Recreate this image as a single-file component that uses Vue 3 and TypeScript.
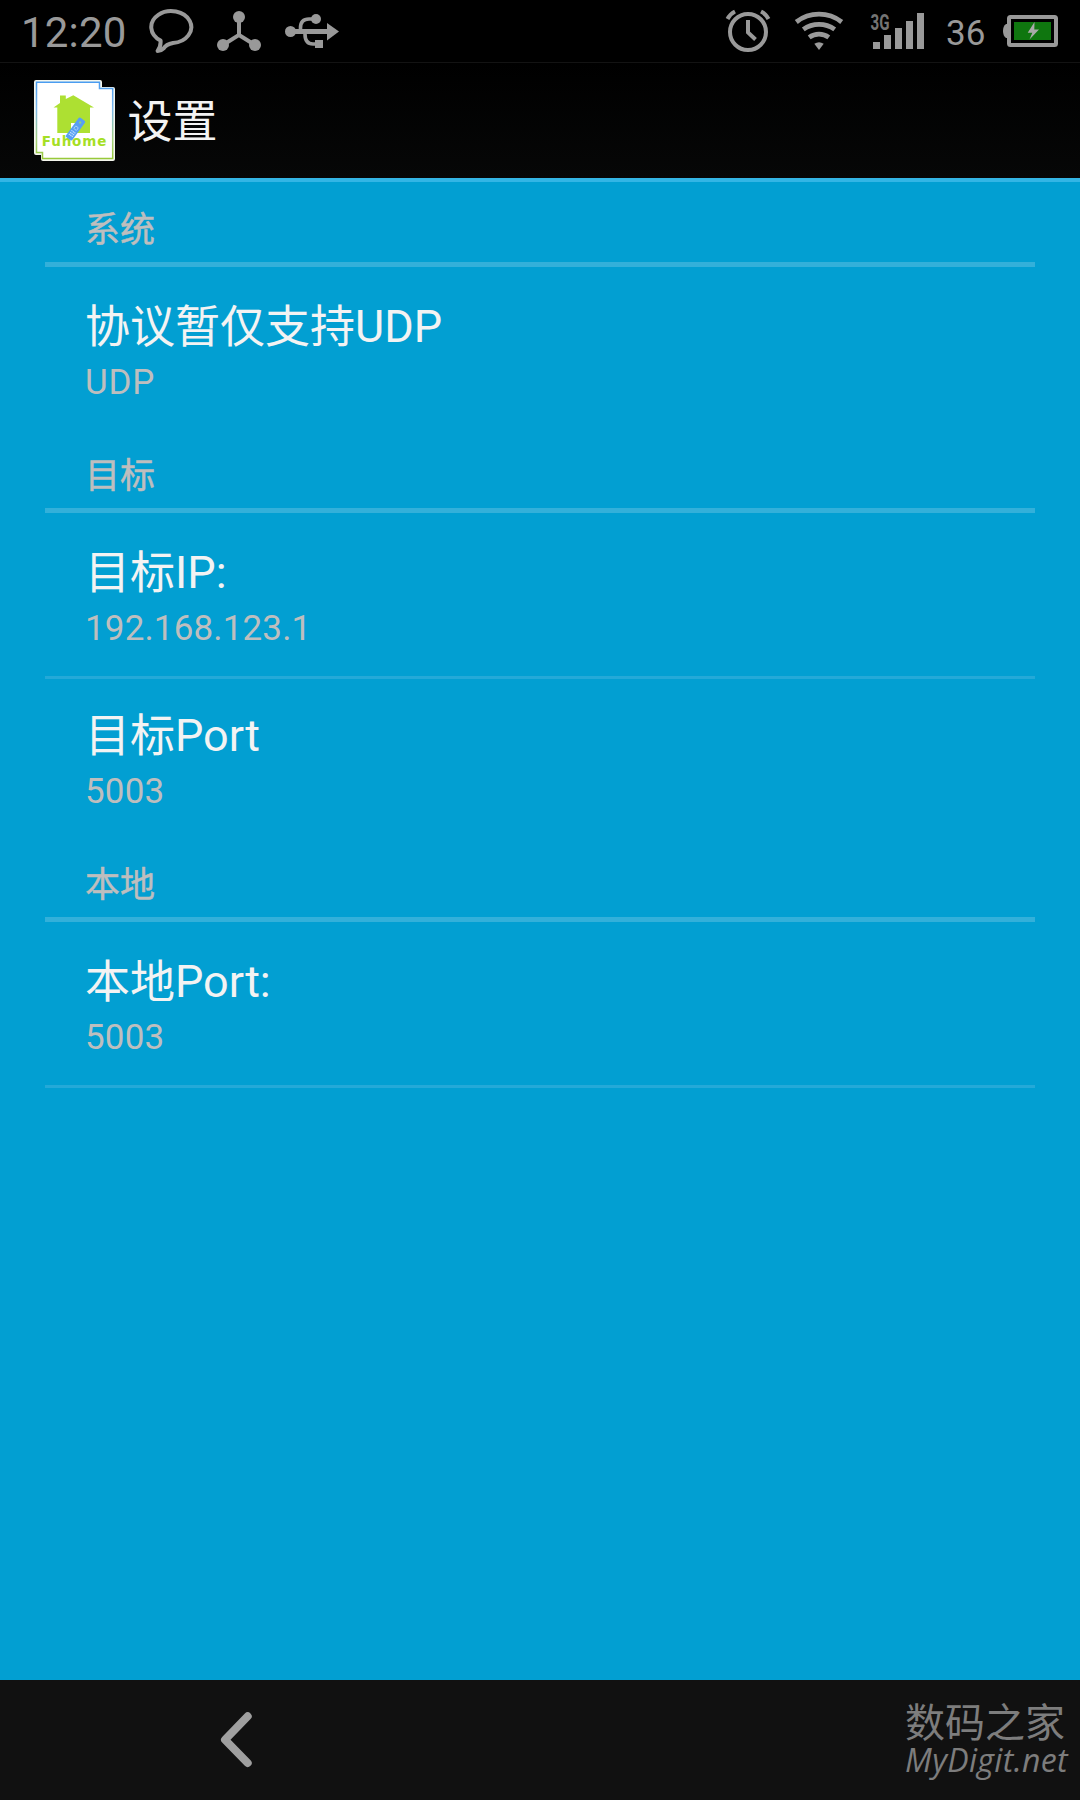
<script setup lang="ts">
interface Preference {
  label: string
  suffix: string
  summary: string
}

interface Category {
  name: string
  items: Preference[]
}

const categories: Category[] = [
  { name: '系统', items: [{ label: '协议暂仅支持', suffix: 'UDP', summary: 'UDP' }] },
  {
    name: '目标',
    items: [
      { label: '目标', suffix: 'IP:', summary: '192.168.123.1' },
      { label: '目标', suffix: 'Port', summary: '5003' },
    ],
  },
  { name: '本地', items: [{ label: '本地', suffix: 'Port:', summary: '5003' }] },
]
</script>

<template>
  <div class="screen">
    <div class="status">
      <span class="clock">12:20</span>
      <svg class="chat" width="46" height="62" viewBox="148 0 46 62">
        <path d="M160.6 40.6A20 16 0 1 1 173 43Q166 44.4 163.6 48.4Q161.4 50.8 157.6 51Q161 46.500 160.600 40.600Z" fill="none" stroke="#999" stroke-width="4" stroke-linejoin="round" />
      </svg>
      <svg class="nodes" width="46" height="62" viewBox="216 0 46 62">
        <path d="M239 17V35L223 45M239 35L255 45" fill="none" stroke="#999" stroke-width="4" />
        <g fill="#999">
          <circle cx="239" cy="17" r="6" />
          <circle cx="223" cy="45" r="6" />
          <circle cx="255" cy="45" r="6" />
        </g>
      </svg>
      <svg class="usb" width="56" height="62" viewBox="284 0 56 62">
        <path d="M290 31.500H328" stroke="#999" stroke-width="5" />
        <path d="M300.500 31V28Q300.500 19 309 19H316M305 31V34Q305 44 313 44H317" fill="none" stroke="#999" stroke-width="3.600" />
        <g fill="#999">
          <circle cx="290.500" cy="31.500" r="5.500" />
          <circle cx="316" cy="19" r="5" />
          <rect x="315" y="40" width="8" height="8" />
          <path d="M327 23L339 31.500L327 40.500Z" />
        </g>
      </svg>

      <span class="spacer"></span>

      <svg class="alarm" width="46" height="62" viewBox="725 0 46 62">
        <g fill="none" stroke="#999" stroke-width="4">
          <circle cx="748" cy="32" r="18" />
          <path d="M748 20V32.500L755.500 39.500" />
          <path d="M727.500 19Q730 14 735 11.500M768.500 19Q766 14 761 11.500" />
        </g>
      </svg>
      <svg class="wifi" width="50" height="62" viewBox="794 0 50 62">
        <g fill="none" stroke="#999" stroke-width="4.800">
          <path d="M796.300 22A37 37 0 0 1 841.700 22" />
          <path d="M803.300 29.400A27 27 0 0 1 834.700 29.400" />
          <path d="M809.200 37.400A16.700 16.700 0 0 1 828.800 37.400" />
        </g>
        <path d="M814.300 43.800Q819 40.500 823.700 43.800L819 50Z" fill="#999" />
      </svg>
      <svg class="signal" width="55" height="62" viewBox="870 0 55 62">
        <text class="net" x="870.500" y="29.500" textLength="19" lengthAdjust="spacingAndGlyphs">3G</text>
        <path d="M873 42h7v7h-7zM884 35h7v14h-7zM895 28h7v21h-7zM906 21h7v28h-7zM917 13h7v36h-7z" fill="#999" />
      </svg>
      <span class="level">36</span>
      <svg class="battery" width="57" height="62" viewBox="1002 0 57 62">
        <path d="M1008 24H1006Q1003 26 1003 31T1006 38H1008Z" fill="#999" />
        <rect x="1009" y="17" width="47" height="28" rx="1.500" fill="none" stroke="#999" stroke-width="4" />
        <rect x="1014" y="22" width="37" height="18" fill="#0f760f" />
        <path d="M1034.500 22L1027.700 32.700H1032.300L1029.500 39.500L1039 29.500H1034.300Z" fill="#aaa" />
      </svg>
    </div>

    <header class="action-bar">
      <svg width="83" height="83" viewBox="33 79 83 83">
        <defs>
          <linearGradient id="edge" x1="0" y1="0" x2="0" y2="1">
            <stop offset="0" stop-color="#4a9cf0" />
            <stop offset="0.350" stop-color="#7cb8ec" />
            <stop offset="0.750" stop-color="#a5cf80" />
            <stop offset="1" stop-color="#98c93a" />
          </linearGradient>
        </defs>
        <path d="M36 80H100Q102 80 102 82V87H113Q115 87 115 89V159Q115 161 113 161H43Q41 161 41 159V155H36Q34 155 34 153V82Q34 80 36 80Z" fill="#f4f6ee" />
        <path d="M36.500 82.300H99.500V88.500H112.700V158.400H42.500V152.500H36.500Z" fill="#fff" stroke="url(#edge)" stroke-width="1.500" />
        <path d="M60 103V95.500H65.800V99L73.300 95.200L94 107.500H90V133H57.300V107.500H53.500Z" fill="#ade032" />
        <rect x="71" y="123" width="5" height="10" fill="#fff" />
        <text class="logo" x="41.800" y="145.500" textLength="64.500" lengthAdjust="spacing">Fuhome</text>
        <g transform="rotate(36 75.500 129)">
          <rect x="71.500" y="117" width="8" height="24" rx="1.500" fill="#579ff3" />
          <circle cx="75.500" cy="121" r="1.200" fill="#87cd8f" />
          <circle cx="75.500" cy="128" r="1.900" fill="none" stroke="#a9d0fa" stroke-width="0.900" />
          <path d="M73 132.500H78M73 134.700H78M73 136.900H78" stroke="#c3defb" stroke-width="1.200" stroke-dasharray="1.300 0.500" />
        </g>
      </svg>
      <h1>设置</h1>
    </header>

    <main class="list">
      <section v-for="category in categories" :key="category.name">
        <h2>{{ category.name }}</h2>
        <div v-for="item in category.items" :key="item.suffix" class="row">
          <div class="title"><span class="label">{{ item.label }}</span><span>{{ item.suffix }}</span></div>
          <div class="summary">{{ item.summary }}</div>
        </div>
      </section>
      <div class="end"></div>
    </main>

    <nav class="nav">
      <svg class="back" width="40" height="60" viewBox="215 1710 40 60">
        <path d="M247.700 1716.300L225 1739.700L247.700 1763" fill="none" stroke="#9f9f9f" stroke-width="8" stroke-linecap="round" stroke-linejoin="round" />
      </svg>
      <div class="mark">
        <div class="mark-cn">数码之家</div>
        <div class="mark-en">MyDigit.net</div>
      </div>
    </nav>
  </div>
</template>

<style>
body {
  margin: 0;
  background: #029fd2;
}
</style>

<style scoped>
.screen {
  display: flex;
  flex-direction: column;
  width: 1080px;
  height: 1800px;
  overflow: hidden;
  background: #029fd2;
  font-family: Roboto, "Noto Sans CJK SC", sans-serif;
}

svg {
  display: block;
  flex: none;
}

.status {
  display: flex;
  flex: none;
  box-sizing: border-box;
  height: 62px;
  padding: 0 21px 0 21px;
  background: #000;
  color: #999;
}

.clock {
  width: 127px;
  font-size: 42px;
  line-height: 66px;
  letter-spacing: 0.2px;
  white-space: nowrap;
}

.nodes,
.usb {
  margin-left: 22px;
}

.spacer {
  flex: 1;
}

.wifi {
  margin-left: 23px;
}

.signal {
  margin-left: 26px;
}

.net {
  font-size: 22px;
  font-weight: 700;
  fill: #747474;
}

.level {
  width: 56px;
  margin-left: 21px;
  font-size: 35px;
  line-height: 68px;
}

.action-bar {
  display: flex;
  flex: none;
  box-sizing: border-box;
  height: 120px;
  padding: 16px 0 0 33px;
  border-top: 1px solid #131313;
  border-bottom: 4px solid #33b5e5;
  background: linear-gradient(#000, #060707);
}

.logo {
  font-family: "DejaVu Sans", sans-serif;
  font-size: 13.5px;
  font-weight: 700;
  fill: #a5df25;
}

h1 {
  margin: 17px 0 0 11.5px;
  color: #f3f3f3;
  font-size: 45px;
  font-weight: 400;
  line-height: 53px;
}

.list {
  flex: 1;
  padding: 2px 45px 0;
}

h2 {
  box-sizing: border-box;
  height: 83px;
  margin: 0;
  padding: 26px 0 0 40px;
  border-bottom: 5px solid #33b0da;
  color: #bebebe;
  font-size: 35px;
  font-weight: 400;
  line-height: 42px;
  -webkit-text-stroke: 0.5px #bebebe;
}

.row {
  box-sizing: border-box;
  height: 163px;
  padding: 33px 0 0 40px;
}

.row + .row {
  padding-top: 30px;
  border-top: 3px solid #24a9d8;
}

.title {
  display: flex;
  color: #f3f3f3;
  font-size: 45px;
  line-height: 53px;
}

.label {
  padding-top: 1px;
}

.summary {
  margin-top: 8px;
  color: #bebebe;
  font-size: 35px;
  line-height: 42px;
  letter-spacing: 0.15px;
}

section:first-child .summary {
  letter-spacing: 0.8px;
}

.end {
  height: 3px;
  background: #24a9d8;
}

.nav {
  display: flex;
  flex: none;
  justify-content: space-between;
  box-sizing: border-box;
  height: 120px;
  padding: 0 7px 0 215px;
  background: #111;
}

.back {
  margin-top: 30px;
}

.mark {
  width: 168px;
  padding-top: 24px;
  color: #7d7d7d;
  white-space: nowrap;
}

.mark-cn {
  font-size: 40px;
  line-height: 40px;
}

.mark-en {
  font-family: "Open Sans", "Noto Sans", sans-serif;
  font-size: 32px;
  font-style: italic;
  line-height: 32px;
  letter-spacing: 0.35px;
}
</style>
